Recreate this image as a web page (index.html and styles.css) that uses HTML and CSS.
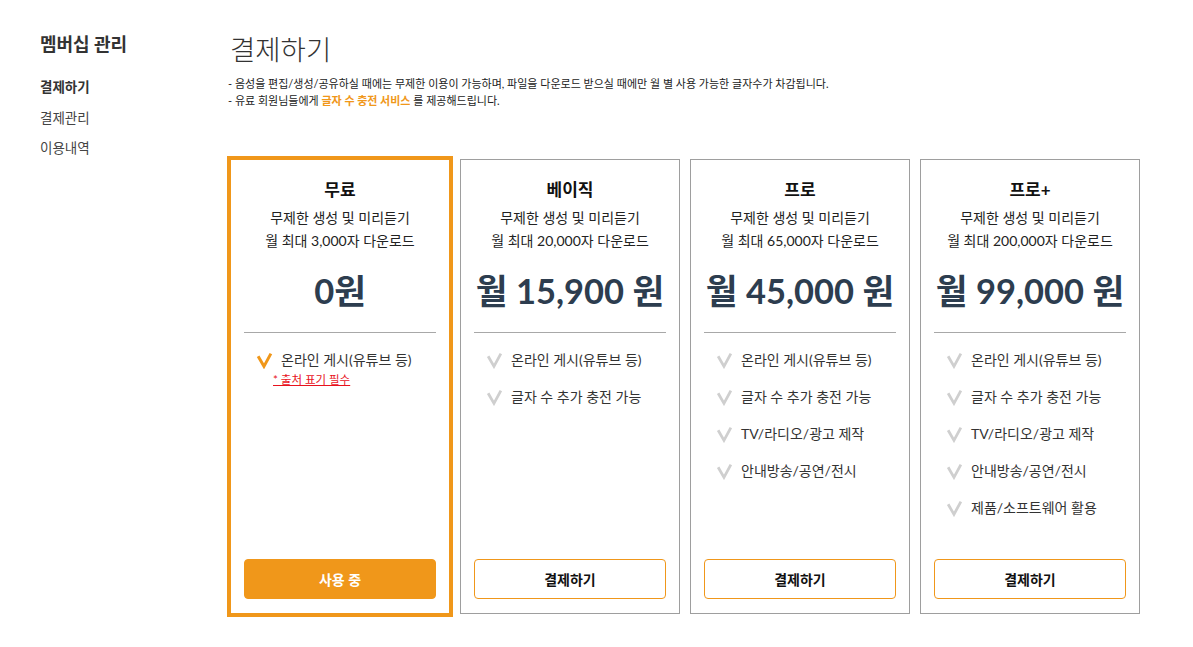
FILE: index.html
```html
<!DOCTYPE html>
<html lang="ko">
<head>
<meta charset="utf-8">
<title>결제하기</title>
<link rel="stylesheet" href="styles.css">
</head>
<body>
<div class="page">
  <aside class="sidebar">
    <h2 class="side-title">멤버십 관리</h2>
    <ul class="side-menu">
      <li class="active">결제하기</li>
      <li>결제관리</li>
      <li>이용내역</li>
    </ul>
  </aside>
  <main class="main">
    <h1 class="title">결제하기</h1>
    <div class="notes">
      <p>- 음성을 편집/생성/공유하실 때에는 무제한 이용이 가능하며, 파일을 다운로드 받으실 때에만 월 별 사용 가능한 글자수가 차감됩니다.</p>
      <p>- 유료 회원님들에게 <span class="hl">글자 수 충전 서비스</span> 를 제공해드립니다.</p>
    </div>
    <div class="cards">
      <div class="card selected">
        <div class="plan">무료</div>
        <div class="desc">무제한 생성 및 미리듣기<br>월 최대 3,000자 다운로드</div>
        <div class="price">0원</div>
        <hr class="divider">
        <ul class="features">
          <li><svg class="chk on" viewBox="0 0 16 16"><path d="M2 4 L7.5 13.5 L14 1.5"/></svg>온라인 게시(유튜브 등)</li>
          <li class="note-row"><span class="note">* 출처 표기 필수</span></li>
        </ul>
        <button class="btn using">사용 중</button>
      </div>
      <div class="card">
        <div class="plan">베이직</div>
        <div class="desc">무제한 생성 및 미리듣기<br>월 최대 20,000자 다운로드</div>
        <div class="price">월 15,900 원</div>
        <hr class="divider">
        <ul class="features">
          <li><svg class="chk" viewBox="0 0 16 16"><path d="M2 4 L7.5 13.5 L14 1.5"/></svg>온라인 게시(유튜브 등)</li>
          <li><svg class="chk" viewBox="0 0 16 16"><path d="M2 4 L7.5 13.5 L14 1.5"/></svg>글자 수 추가 충전 가능</li>
        </ul>
        <button class="btn">결제하기</button>
      </div>
      <div class="card">
        <div class="plan">프로</div>
        <div class="desc">무제한 생성 및 미리듣기<br>월 최대 65,000자 다운로드</div>
        <div class="price">월 45,000 원</div>
        <hr class="divider">
        <ul class="features">
          <li><svg class="chk" viewBox="0 0 16 16"><path d="M2 4 L7.5 13.5 L14 1.5"/></svg>온라인 게시(유튜브 등)</li>
          <li><svg class="chk" viewBox="0 0 16 16"><path d="M2 4 L7.5 13.5 L14 1.5"/></svg>글자 수 추가 충전 가능</li>
          <li><svg class="chk" viewBox="0 0 16 16"><path d="M2 4 L7.5 13.5 L14 1.5"/></svg>TV/라디오/광고 제작</li>
          <li><svg class="chk" viewBox="0 0 16 16"><path d="M2 4 L7.5 13.5 L14 1.5"/></svg>안내방송/공연/전시</li>
        </ul>
        <button class="btn">결제하기</button>
      </div>
      <div class="card">
        <div class="plan">프로+</div>
        <div class="desc">무제한 생성 및 미리듣기<br>월 최대 200,000자 다운로드</div>
        <div class="price">월 99,000 원</div>
        <hr class="divider">
        <ul class="features">
          <li><svg class="chk" viewBox="0 0 16 16"><path d="M2 4 L7.5 13.5 L14 1.5"/></svg>온라인 게시(유튜브 등)</li>
          <li><svg class="chk" viewBox="0 0 16 16"><path d="M2 4 L7.5 13.5 L14 1.5"/></svg>글자 수 추가 충전 가능</li>
          <li><svg class="chk" viewBox="0 0 16 16"><path d="M2 4 L7.5 13.5 L14 1.5"/></svg>TV/라디오/광고 제작</li>
          <li><svg class="chk" viewBox="0 0 16 16"><path d="M2 4 L7.5 13.5 L14 1.5"/></svg>안내방송/공연/전시</li>
          <li><svg class="chk" viewBox="0 0 16 16"><path d="M2 4 L7.5 13.5 L14 1.5"/></svg>제품/소프트웨어 활용</li>
        </ul>
        <button class="btn">결제하기</button>
      </div>
    </div>
  </main>
</div>
</body>
</html>
```

FILE: styles.css
```css
* { box-sizing: border-box; }
html, body { margin: 0; padding: 0; background: #fff; }
body {
  font-family: Lato, "Noto Sans CJK KR", "Noto Sans", sans-serif;
  color: #333;
  min-height: 647px;
}
.page {
  display: flex;
  padding: 32px 0 30px 40px;
}
.sidebar { width: 188px; flex: none; }
.side-title {
  margin: 0;
  font-size: 18px;
  line-height: 24px;
  font-weight: 700;
  color: #333;
}
.side-menu {
  list-style: none;
  margin: 16px 0 0;
  padding: 0;
}
.side-menu li {
  font-size: 13.5px;
  line-height: 30.5px;
  color: #444;
}
.side-menu li.active { font-weight: 700; color: #333; }

.main { flex: none; }
.title {
  margin: 0 0 0 2px;
  font-size: 27.5px;
  line-height: 36px;
  font-weight: 300;
  color: #333;
}
.notes { margin-top: 7px; }
.notes p {
  margin: 0;
  font-size: 11px;
  line-height: 17px;
  color: #222;
}
.notes .hl { color: #f0971a; font-weight: 700; }

.cards {
  display: flex;
  align-items: flex-start;
  gap: 10px;
  margin: 50px 0 0 2px;
  padding-bottom: 4px;
}
.card {
  flex: none;
  width: 220px;
  height: 455px;
  border: 1px solid #9e9e9e;
  background: #fff;
  display: flex;
  flex-direction: column;
  padding: 19px 13px 14px;
  text-align: center;
}
.card.selected {
  width: 226px;
  height: 461px;
  margin: -3px -3px 0;
  border: 4px solid #f0971a;
}
.plan {
  font-size: 17px;
  line-height: 22px;
  font-weight: 700;
  color: #111;
}
.desc {
  margin-top: 5px;
  font-size: 14px;
  line-height: 23px;
  color: #222;
}
.price {
  margin-top: 17px;
  font-size: 34.5px;
  line-height: 44px;
  font-weight: 700;
  color: #2d3d4f;
  white-space: nowrap;
}
.divider {
  margin: 19px 0 0;
  border: 0;
  border-top: 1px solid #a8a8a8;
  height: 0;
}
.features {
  list-style: none;
  margin: 17px 0 0;
  padding: 0;
  text-align: left;
  flex: 1;
}
.features li {
  display: flex;
  align-items: center;
  font-size: 14px;
  line-height: 20px;
  color: #333;
  margin-bottom: 17px;
}
.chk {
  width: 17px;
  height: 17px;
  margin: 0 8px 0 12px;
  flex: none;
}
.chk path {
  fill: none;
  stroke: #cfcfcf;
  stroke-width: 2.6;
  stroke-linecap: butt;
  stroke-linejoin: miter;
}
.chk.on path { stroke: #f0971a; stroke-width: 2.8; }
.features li.note-row {
  margin-top: -14px;
  padding-left: 29px;
}
.note {
  font-size: 11.5px;
  line-height: 14px;
  color: #e8121d;
  text-decoration: underline;
}
.btn {
  margin-top: auto;
  height: 40px;
  width: 100%;
  border: 1px solid #f0971a;
  border-radius: 4px;
  background: #fff;
  font-family: inherit;
  font-size: 14px;
  font-weight: 700;
  color: #111;
  cursor: pointer;
}
.btn.using {
  background: #f0971a;
  color: #fff;
}
```
